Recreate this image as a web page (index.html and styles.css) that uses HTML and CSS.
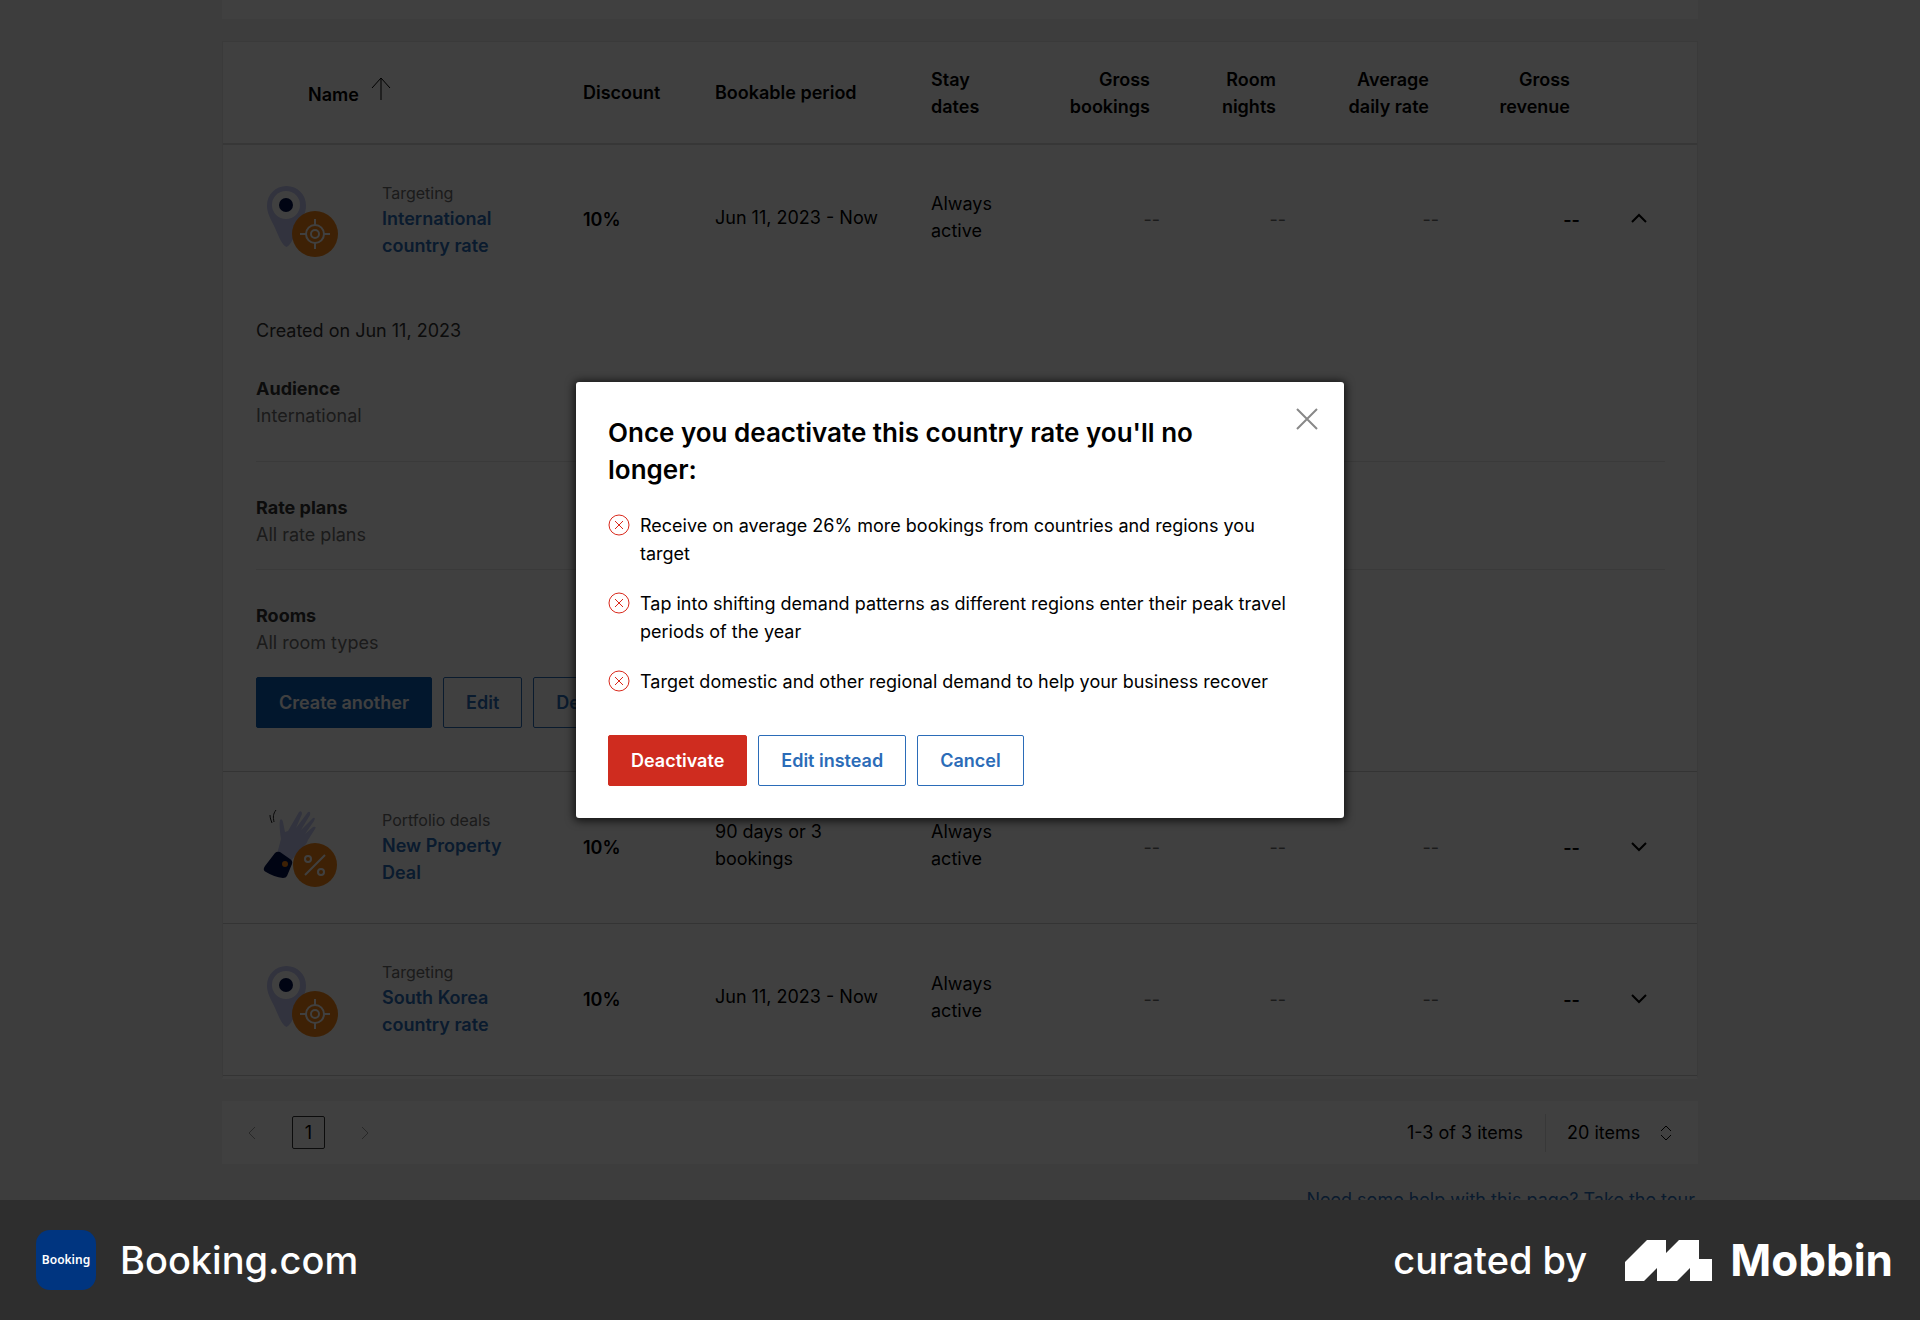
FILE: index.html
```html
<!DOCTYPE html>
<html lang="en">
<head>
  <meta charset="UTF-8">
  <meta name="viewport" content="width=device-width, initial-scale=1">
  <title>Promotions</title>
  <link rel="stylesheet" href="styles.css">
</head>
<body>
  <svg class="sprite" aria-hidden="true">
    <symbol id="pin" viewBox="0 0 80 80">
      <path class="lilac" d="M24.500 5C13.500 5 5 13.500 5 24.500C5 33 9 38 13 47C17 56 20 64 24.500 66C29 64 32 56 36 47C40 38 44 33 44 24.500C44 13.500 35.500 5 24.500 5Z"/>
      <circle class="card-fill" cx="24" cy="24" r="14"/>
      <circle class="navy" cx="24" cy="24" r="7"/>
      <circle class="orange" cx="53" cy="53" r="23"/>
      <g class="badge-line">
        <circle cx="53" cy="53" r="9"/>
        <circle cx="53" cy="53" r="4"/>
        <path d="M53 38v6M53 62v6M38 53h6M62 53h6"/>
      </g>
    </symbol>
    <symbol id="hand" viewBox="0 0 80 80">
      <path class="motion" d="M8 6c0 3 1 5 2 8M14 1c-3 4-3 7-2 12"/>
      <path class="lilac" d="M15 45L19 30C18 23 17 15 18 11Q20 9 21 13L23 23L26 22L37 3Q40 1 40 5L34 19L46 3Q49 2 48 6L39 21L51 9Q54 8 52 12L43 25L51 18Q55 17 53 20L46 31C44 37 38 41 33 47L29 52Z"/>
      <path class="navy" d="M13 44Q15 42 18 43L28 50Q31 52 30 55L25 67Q24 69 21 69Q12 68 4 63Q0 61 3 57Z"/>
      <circle class="orange" cx="23" cy="55" r="3"/>
      <circle class="orange" cx="53" cy="56" r="22"/>
      <g class="badge-line">
        <path d="M43 66L63 46"/>
        <circle cx="46" cy="50" r="3"/>
        <circle cx="59" cy="63" r="3"/>
      </g>
    </symbol>
    <symbol id="down" viewBox="0 0 18 12">
      <path d="M2 2l7 7l7-7"/>
    </symbol>
    <symbol id="wrong" viewBox="0 0 22 22">
      <circle cx="11" cy="11" r="10"/>
      <path d="M7 7l8 8M15 7l-8 8"/>
    </symbol>
  </svg>

  <main class="screen">
    <div class="page">
      <div class="panel-top"></div>

      <table class="deals">
        <colgroup>
          <col class="c-name"><col class="c-discount"><col class="c-period"><col class="c-stay">
          <col class="c-bookings"><col class="c-nights"><col class="c-rate"><col class="c-revenue"><col class="c-toggle">
        </colgroup>
        <thead>
          <tr>
            <th class="name-head">Name
              <svg class="arrow" viewBox="0 0 20 24" aria-hidden="true"><path d="M10 23V1M1 11l9-10l9 10"/></svg>
            </th>
            <th>Discount</th>
            <th>Bookable period</th>
            <th>Stay<br>dates</th>
            <th class="num">Gross<br>bookings</th>
            <th class="num">Room<br>nights</th>
            <th class="num">Average<br>daily rate</th>
            <th class="num">Gross<br>revenue</th>
            <th></th>
          </tr>
        </thead>
        <tbody>
          <tr class="deal">
            <td>
              <div class="name">
                <svg class="art" aria-hidden="true"><use href="#pin"/></svg>
                <div><small>Targeting</small><a href="#">International country rate</a></div>
              </div>
            </td>
            <td class="strong">10%</td>
            <td class="period">Jun 11, 2023 - Now</td>
            <td class="stay">Always active</td>
            <td class="num">--</td>
            <td class="num">--</td>
            <td class="num">--</td>
            <td class="num strong">--</td>
            <td class="toggle"><button aria-label="Collapse"><svg class="chevron up"><use href="#down"/></svg></button></td>
          </tr>
          <tr>
            <td colspan="9" class="details">
              <p class="created">Created on Jun 11, 2023</p>
              <section class="audience">
                <h3>Audience</h3>
                <p>International</p>
              </section>
              <section>
                <h3>Rate plans</h3>
                <p>All rate plans</p>
              </section>
              <section>
                <h3>Rooms</h3>
                <p>All room types</p>
              </section>
              <div class="buttons">
                <button class="btn primary">Create another</button>
                <button class="btn">Edit</button>
                <button class="btn">Deactivate</button>
              </div>
            </td>
          </tr>
          <tr class="deal ruled">
            <td>
              <div class="name">
                <svg class="art" aria-hidden="true"><use href="#hand"/></svg>
                <div><small>Portfolio deals</small><a href="#">New Property Deal</a></div>
              </div>
            </td>
            <td class="strong">10%</td>
            <td class="period">90 days or 3 bookings</td>
            <td class="stay">Always active</td>
            <td class="num">--</td>
            <td class="num">--</td>
            <td class="num">--</td>
            <td class="num strong">--</td>
            <td class="toggle"><button aria-label="Expand"><svg class="chevron"><use href="#down"/></svg></button></td>
          </tr>
          <tr class="deal ruled">
            <td>
              <div class="name">
                <svg class="art" aria-hidden="true"><use href="#pin"/></svg>
                <div><small>Targeting</small><a href="#">South Korea country rate</a></div>
              </div>
            </td>
            <td class="strong">10%</td>
            <td class="period">Jun 11, 2023 - Now</td>
            <td class="stay">Always active</td>
            <td class="num">--</td>
            <td class="num">--</td>
            <td class="num">--</td>
            <td class="num strong">--</td>
            <td class="toggle"><button aria-label="Expand"><svg class="chevron"><use href="#down"/></svg></button></td>
          </tr>
        </tbody>
      </table>

      <div class="pagination">
        <nav class="pages" aria-label="Pages">
          <button aria-label="Previous page" disabled><svg class="step" viewBox="0 0 8 14"><path d="M7 1L1 7l6 6"/></svg></button>
          <button class="current">1</button>
          <button aria-label="Next page" disabled><svg class="step" viewBox="0 0 8 14"><path d="M1 1l6 6l-6 6"/></svg></button>
        </nav>
        <span class="count">1-3 of 3 items</span>
        <label class="per-page">
          <select aria-label="Items per page"><option>20 items</option></select>
          <svg class="sort" viewBox="0 0 12 16" aria-hidden="true"><path d="M1 6l5-5l5 5M1 10l5 5l5-5"/></svg>
        </label>
      </div>

      <a class="help" href="#">Need some help with this page? Take the tour</a>
    </div>

    <div class="overlay">
      <div class="modal" role="dialog" aria-modal="true" aria-labelledby="modal-title">
        <button class="close" aria-label="Close"><svg viewBox="0 0 22 22"><path d="M1 1l20 20M21 1L1 21"/></svg></button>
        <h2 id="modal-title">Once you deactivate this country rate you'll no longer:</h2>
        <ul>
          <li><svg class="wrong"><use href="#wrong"/></svg>Receive on average 26% more bookings from countries and regions you target</li>
          <li><svg class="wrong"><use href="#wrong"/></svg>Tap into shifting demand patterns as different regions enter their peak travel periods of the year</li>
          <li><svg class="wrong"><use href="#wrong"/></svg>Target domestic and other regional demand to help your business recover</li>
        </ul>
        <div class="buttons">
          <button class="btn danger">Deactivate</button>
          <button class="btn">Edit instead</button>
          <button class="btn">Cancel</button>
        </div>
      </div>
    </div>
  </main>

  <footer>
    <span class="app-icon">Booking</span>
    <span class="app-name">Booking.com</span>
    <span class="curated">curated by</span>
    <svg class="mobbin-mark" viewBox="0 0 87 41" aria-hidden="true"><path d="M0 22L22 0H41V13L54 0H74V19H87V41H65V28L52 41H32V28L19 41H0Z"/></svg>
    <span class="mobbin">Mobbin</span>
  </footer>
</body>
</html>
```
FILE: styles.css
```css
* { box-sizing: border-box; }
body {
  margin: 0;
  height: 100vh;
  display: flex;
  flex-direction: column;
  background: #f2f2f2;
  color: #000;
  font-family: Inter, "Liberation Sans", sans-serif;
  font-size: 18px;
  line-height: 27px;
}
h2, h3, p, ul { margin: 0; padding: 0; }
h3 { font-size: 18px; font-weight: 700; }
button, select {
  font: inherit;
  color: inherit;
  background: none;
  border: none;
  padding: 0;
  cursor: pointer;
}
a { color: #2b6cb8; text-decoration: none; }
svg { fill: none; stroke: currentColor; }
.sprite { position: absolute; width: 0; height: 0; }

.screen {
  flex: 1;
  min-height: 0;
  position: relative;
  overflow: hidden;
}
.page {
  max-width: 1476px;
  margin: 0 auto;
}
.panel-top {
  height: 19px;
  margin-bottom: 22px;
  background: #fff;
}

/* deals table */
.deals {
  width: 100%;
  table-layout: fixed;
  border-collapse: separate;
  border-spacing: 0;
  background: #fff;
  border: 1px solid #e6e6e6;
  border-bottom: 3px solid #fff;
}
.c-name { width: 360px; }
.c-discount { width: 132px; }
.c-period { width: 216px; }
.c-stay { width: 109px; }
.c-bookings { width: 120px; }
.c-nights { width: 126px; }
.c-rate { width: 153px; }
.c-revenue { width: 141px; }
.c-toggle { width: 117px; }
th {
  height: 103px;
  padding: 0;
  text-align: left;
  font-weight: 600;
  border-bottom: 2px solid #d9d9d9;
}
td { padding: 0; }
.details, .ruled td { border-bottom: 1px solid #d0d0d0; }
.name-head { padding-left: 85px; }
.arrow {
  width: 20px;
  height: 24px;
  margin-left: 8px;
}
.num { text-align: right; }
th.num { padding-right: 10px; }
td.num { color: #6b6b6b; }
td.strong { color: #000; font-weight: 600; }
.deal td { height: 152px; padding-bottom: 3px; }
.deal .stay { padding: 0 32px 8px 0; }
.deal .period { padding: 0 50px 8px 0; }
.deal .toggle { padding: 0 0 8px 50px; }
.deal.ruled td { padding-bottom: 1px; }
.deal.ruled .stay, .deal.ruled .period { padding-bottom: 6px; }
.deal.ruled .toggle { padding-bottom: 3px; }
.name {
  display: flex;
  align-items: center;
  gap: 40px;
  padding-left: 39px;
}
.name > div { width: 130px; }
.name small {
  display: block;
  font-size: 16px;
  line-height: 24px;
  color: #6b6b6b;
}
.name a { font-weight: 600; }
.art { width: 80px; height: 80px; margin-top: 3px; flex: none; stroke: none; }
.lilac { fill: #c5caf5; }
.card-fill { fill: #fff; }
.navy { fill: #00104d; }
.orange { fill: #f58414; }
.badge-line { fill: none; stroke: #fff; stroke-width: 2; }
.motion { fill: none; stroke: #222; }
.chevron {
  display: block;
  width: 18px;
  height: 12px;
  stroke-width: 2;
}
.up { transform: rotate(180deg); }

.details { padding: 20px 32px 43px 33px; }
.created { padding-bottom: 31px; color: #333; }
section { padding-bottom: 21px; color: #6b6b6b; }
section h3 { color: #333; }
.audience { padding-bottom: 32px; }
section + section {
  border-top: 1px solid #e6e6e6;
  padding-top: 32px;
}

.buttons { display: flex; gap: 11px; }
.btn {
  height: 51px;
  padding: 0 22px;
  border: 1px solid #2b6cb8;
  border-radius: 2px;
  color: #2b6cb8;
  font-weight: 600;
}
.btn.primary { background: #0b5cb2; border-color: #0b5cb2; color: #fff; }

/* pagination */
.pagination {
  display: flex;
  align-items: center;
  height: 63px;
  margin-top: 22px;
  padding: 0 26px;
  background: #fff;
}
.pages { display: flex; align-items: center; gap: 36px; }
.step { display: block; width: 8px; height: 14px; stroke: #a0a0a0; }
.current {
  width: 33px;
  height: 33px;
  border: 1px solid #333;
  border-radius: 2px;
}
.count { margin-left: auto; }
.per-page {
  display: flex;
  align-items: center;
  gap: 19px;
  height: 38px;
  margin-left: 22px;
  padding-left: 21px;
  border-left: 1px solid #e0e0e0;
}
.per-page select { appearance: none; }
.sort { width: 12px; height: 16px; }
.help {
  display: block;
  margin-top: 22px;
  padding-right: 3px;
  text-align: right;
}

/* modal */
.overlay {
  position: absolute;
  inset: 0;
  display: flex;
  align-items: center;
  justify-content: center;
  background: rgba(0, 0, 0, .75);
}
.modal {
  position: relative;
  width: 768px;
  padding: 32px;
  background: #fff;
  border-radius: 3px;
  box-shadow: 0 1px 8px 2px rgba(0, 0, 0, .7);
}
.modal h2 {
  padding-right: 80px;
  font-size: 26px;
  line-height: 37px;
  font-weight: 600;
}
.modal ul {
  display: flex;
  flex-direction: column;
  gap: 22px;
  margin: 24px 0 39px;
  padding-right: 16px;
  list-style: none;
  line-height: 28px;
}
.modal li { display: flex; gap: 10px; }
.wrong {
  flex: none;
  width: 22px;
  height: 22px;
  margin-top: 2px;
  color: #d9291c;
}
.modal .danger { background: #cf2c1f; border-color: #cf2c1f; color: #fff; }
.close {
  position: absolute;
  top: 26px;
  right: 26px;
  color: #888;
}
.close svg { display: block; width: 22px; height: 22px; stroke-width: 2; }

footer {
  display: flex;
  align-items: center;
  height: 120px;
  padding: 0 27px 0 36px;
  background: #2e2e2e;
  color: #fff;
  font-size: 38px;
}
.app-icon {
  width: 60px;
  height: 60px;
  margin-right: 24px;
  border-radius: 14px;
  background: #003580;
  font: 600 12px/60px "Noto Sans", sans-serif;
  text-align: center;
}
.app-name, .curated { font-weight: 500; }
.curated { margin-left: auto; }
.mobbin-mark {
  width: 87px;
  height: 41px;
  margin: 0 18px 0 38px;
  fill: #fff;
  stroke: none;
}
.mobbin { font-size: 44px; font-weight: 700; }
```
